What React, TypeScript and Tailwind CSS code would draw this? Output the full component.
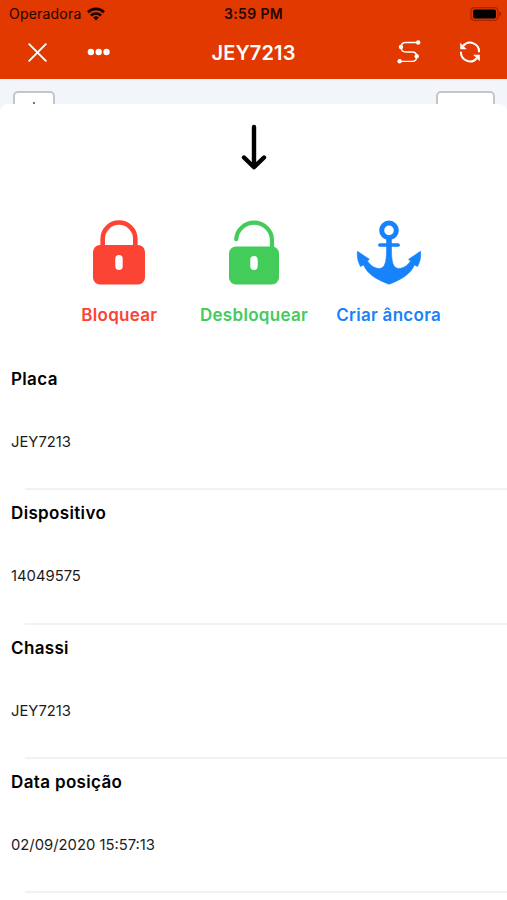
import React from "react";

type Action = {
  label: string;
  className: string;
  icon: React.ReactNode;
};

type Detail = {
  label: string;
  value: string;
};

const details: Detail[] = [
  { label: "Placa", value: "JEY7213" },
  { label: "Dispositivo", value: "14049575" },
  { label: "Chassi", value: "JEY7213" },
  { label: "Data posição", value: "02/09/2020 15:57:13" },
];

const actions: Action[] = [
  { label: "Bloquear", className: "text-[#fb4434]", icon: <LockIcon /> },
  { label: "Desbloquear", className: "text-[#43cc5a]", icon: <UnlockIcon /> },
  { label: "Criar âncora", className: "text-[#1783fb]", icon: <AnchorIcon /> },
];

function LockIcon() {
  return (
    <svg width="54" height="66" viewBox="0 0 54 66" fill="none">
      <path d="M10.700 28V18.800a16.300 16.300 0 0 1 32.600 0V28" stroke="currentColor" strokeWidth="4.600" />
      <path
        fill="currentColor"
        fillRule="evenodd"
        d="M8 25h38a7 7 0 0 1 7 7v25.600a7 7 0 0 1-7 7H8a7 7 0 0 1-7-7V32a7 7 0 0 1 7-7zM27 35a3.700 3.700 0 0 0-3.700 3.700v7.600a3.700 3.700 0 0 0 7.400 0v-7.600a3.700 3.700 0 0 0-3.700-3.700z"
      />
    </svg>
  );
}

function UnlockIcon() {
  return (
    <svg width="54" height="66" viewBox="0 0 54 66" fill="none">
      <path
        d="M9.200 19.200A18 17.800 0 0 1 27 2.600A18 17.800 0 0 1 45 20.400V30"
        stroke="currentColor"
        strokeWidth="4.200"
        strokeLinecap="round"
      />
      <path
        fill="currentColor"
        fillRule="evenodd"
        d="M9 26.400h36a7 7 0 0 1 7 7v24.200a7 7 0 0 1-7 7H9a7 7 0 0 1-7-7V33.400a7 7 0 0 1 7-7zM27 36a3.700 3.700 0 0 0-3.700 3.700v6.600a3.700 3.700 0 0 0 7.400 0v-6.600a3.700 3.700 0 0 0-3.700-3.700z"
      />
    </svg>
  );
}

function AnchorIcon() {
  return (
    <svg width="66" height="66" viewBox="0 0 66 66" fill="currentColor">
      <circle cx="33" cy="10.400" r="7.300" fill="none" stroke="currentColor" strokeWidth="5" />
      <rect x="22.200" y="23.200" width="21.600" height="3.600" rx="1.600" />
      <path
        d="M30.500 17.500h5V30c0 6 .4 12 2.300 15.500 1.500 2.700 4.200 3.400 7 2.800 4-.8 7.500-3.600 9.700-7.200l-1.900-1.800L64.500 31.300c.9 5.500-.6 11-3 15.300l-3-1.700C54.500 54 46 59.200 33 64.300 20 59.200 11.500 54 7.500 44.900l-3 1.700c-2.400-4.300-3.900-9.800-3-15.300l11.900 8-1.900 1.800c2.200 3.600 5.700 6.400 9.700 7.200 2.800.6 5.500-.1 7-2.800 1.900-3.500 2.300-9.500 2.300-15.500z"
        stroke="currentColor"
        strokeWidth="0.600"
        strokeLinejoin="round"
      />
    </svg>
  );
}

function RouteIcon() {
  return (
    <svg width="24" height="24" viewBox="0 0 24 24" fill="none">
      <path
        d="M21 2.500H9C5.500 2.500 4 4.500 4 7c0 3 2 5 5 5h6c3 0 4.700 1.800 4.700 4.400 0 2.900-1.900 4.900-4.700 4.900H2.500"
        stroke="white"
        strokeWidth="1.300"
      />
      <g fill="white">
        <circle cx="21.200" cy="2.500" r="2.200" />
        <circle cx="4" cy="7" r="2.200" />
        <circle cx="19.700" cy="16.200" r="2.200" />
        <circle cx="2.600" cy="21.300" r="2.200" />
      </g>
    </svg>
  );
}

function RefreshIcon() {
  return (
    <svg width="22" height="22" viewBox="0 0 22 22" fill="none">
      <path d="M4.200 4.800A9 9 0 0 1 20 11.300" stroke="white" strokeWidth="2.100" />
      <path d="M17.800 17.200A9 9 0 0 1 2 10.700" stroke="white" strokeWidth="2.100" />
      <path d="M1.200 1.800v6.400h6.600z" fill="white" />
      <path d="M20.800 20.200v-6.400h-6.600z" fill="white" />
    </svg>
  );
}

function StatusBar() {
  return (
    <div className="grid h-[27px] grid-cols-3 items-center text-[14px] text-[#250500]">
      <div className="flex items-center gap-[6px] pl-[9px]">
        <span className="tracking-[0.2px]">Operadora</span>
        <svg width="18" height="14" viewBox="0 0 18 14" fill="none" stroke="#160300">
          <path d="M1 5.200a11.400 11.400 0 0 1 16 0" strokeWidth="2.700" />
          <path d="M3.900 8.500a7.300 7.300 0 0 1 10.200 0" strokeWidth="2.500" />
          <path d="M9 13.600l-2.900-3a4.200 4.200 0 0 1 5.800 0z" fill="#160300" stroke="none" />
        </svg>
      </div>
      <span className="text-center font-semibold tracking-[0.35px]">3:59 PM</span>
      <svg className="mr-[5px] justify-self-end" width="32" height="14" viewBox="0 0 32 14">
        <rect x="1" y="0.700" width="27" height="12.600" rx="3.500" fill="none" stroke="#a32700" strokeWidth="1.200" />
        <rect x="3" y="2.500" width="23" height="9" rx="2" fill="black" />
        <path d="M29.500 4.800c2 .7 2 3.700 0 4.400z" fill="#8a2000" />
      </svg>
    </div>
  );
}

function NavBar() {
  return (
    <div className="grid h-[52px] grid-cols-3 items-center pb-[2px]">
      <div className="flex items-center gap-[40px] pl-[28px]">
        <svg width="19" height="19" viewBox="0 0 19 19" stroke="white" strokeWidth="1.900" strokeLinecap="round">
          <path d="M1.200 1.200l16.600 16.600M17.800 1.200L1.200 17.800" />
        </svg>
        <svg width="24" height="8" viewBox="0 0 24 8" fill="white">
          <circle cx="3.900" cy="4" r="3.200" />
          <circle cx="11.700" cy="4" r="3.200" />
          <circle cx="19.500" cy="4" r="3.200" />
        </svg>
      </div>
      <h1 className="pt-px text-center text-[20px] font-semibold tracking-[0.15px] text-white">JEY7213</h1>
      <div className="flex items-center justify-end gap-[38px] pr-[26px]">
        <RouteIcon />
        <RefreshIcon />
      </div>
    </div>
  );
}

function DetailRow({ label, value }: Detail) {
  return (
    <li className="flex h-[134.300px] flex-col">
      <h2 className="pt-[11px] pl-[11px] text-[17px] leading-[24px] font-semibold tracking-[0.350px] text-black">
        {label}
      </h2>
      <p className="mt-[41px] pl-[11px] text-[14.800px] leading-[20px] text-[#1c1c1c]">{value}</p>
      <div className="mt-auto ml-[25px] h-[2px] bg-[#f2f2f2]" />
    </li>
  );
}

export default function App() {
  return (
    <div className="flex h-[900px] w-[507px] flex-col overflow-hidden bg-[#f2f6fa] font-['Inter','Liberation_Sans',sans-serif]">
      <header className="h-[79px] shrink-0 bg-[#e13900]">
        <StatusBar />
        <NavBar />
      </header>

      {/* map controls peeking out above the sheet */}
      <div className="flex h-[25px] shrink-0 justify-between overflow-hidden pt-[12px] pr-[12px] pl-[13px]">
        <div className="flex h-[30px] w-[42px] justify-center rounded-[5px] border-2 border-[#c3c6c8] bg-white pt-[9px]">
          <div className="h-[10px] w-[2px] bg-[#777]" />
        </div>
        <div className="h-[30px] w-[59px] rounded-[5px] border-2 border-[#c3c6c8] bg-white" />
      </div>

      <main className="flex-1 rounded-t-[8px] bg-white">
        <div className="flex justify-center pt-[20px]">
          <svg
            width="26"
            height="46"
            viewBox="0 0 26 46"
            fill="none"
            stroke="black"
            strokeWidth="4.400"
            strokeLinecap="round"
            strokeLinejoin="round"
          >
            <path d="M13 3v40M3 33.500L13 43.300l10-9.800" />
          </svg>
        </div>

        <div className="mt-[50px] ml-[52px] grid w-[404px] grid-cols-3">
          {actions.map((action) => (
            <button key={action.label} className={`flex flex-col items-center ${action.className}`}>
              {action.icon}
              <span className="mt-[17px] text-[17px] leading-[24px] font-semibold tracking-[0.300px] whitespace-nowrap">
                {action.label}
              </span>
            </button>
          ))}
        </div>

        <ul className="mt-[29px]">
          {details.map((detail) => (
            <DetailRow key={detail.label} {...detail} />
          ))}
        </ul>
      </main>
    </div>
  );
}
